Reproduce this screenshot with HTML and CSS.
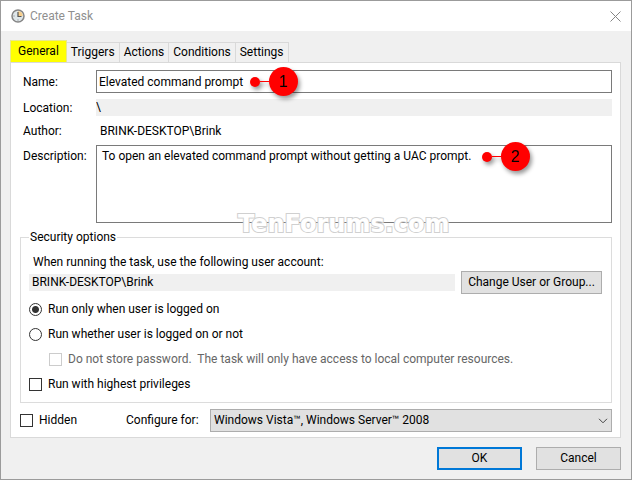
FILE: index.html
```html
<!DOCTYPE html>
<html lang="en">
<head>
<meta charset="utf-8">
<title>Create Task</title>
<link rel="stylesheet" href="styles.css">
</head>
<body>
<main class="window">
  <header class="titlebar">
    <svg class="clock" viewBox="0 0 14 14" aria-hidden="true">
      <circle cx="7" cy="7" r="6" fill="#dfe7ea" stroke="#858585" stroke-width="1.5"/>
      <path d="M7 7V2.2A4.8 4.8 0 0 1 11.800 7Z" fill="#f8cf8c"/>
      <path d="M7 3V7.500H10.500" fill="none" stroke="#555" stroke-width="1.200"/>
      <path d="M2.500 7h1M7 11.500v-1" stroke="#777"/>
    </svg>
    <h1 class="title">Create Task</h1>
    <button class="close" type="button" aria-label="Close">
      <svg viewBox="0 0 11 11" aria-hidden="true"><path d="M.5 .5l10 10M10.500 .5l-10 10" stroke="#858585" fill="none"/></svg>
    </button>
  </header>

  <form class="body">
    <nav class="tabs" role="tablist">
      <button class="tab tab-active" type="button" role="tab" aria-selected="true">General</button>
      <button class="tab" type="button" role="tab">Triggers</button>
      <button class="tab" type="button" role="tab">Actions</button>
      <button class="tab" type="button" role="tab">Conditions</button>
      <button class="tab" type="button" role="tab">Settings</button>
    </nav>

    <section class="panel">
      <div class="fields">
        <label for="name">Name:</label>
        <div class="control">
          <input class="box" id="name" type="text" value="Elevated command prompt">
          <span class="callout callout-name"><i class="dot"></i><i class="line"></i><b class="badge">1</b></span>
        </div>
        <label for="location">Location:</label>
        <input class="readonly" id="location" type="text" value="\" readonly>
        <span>Author:</span>
        <span class="author">BRINK-DESKTOP\Brink</span>
        <label class="label-top" for="description">Description:</label>
        <div class="control">
          <textarea class="box area" id="description">To open an elevated command prompt without getting a UAC prompt.</textarea>
          <span class="callout callout-description"><i class="dot"></i><i class="line"></i><b class="badge">2</b></span>
          <span class="watermark">TenForums.com</span>
        </div>
      </div>

      <fieldset class="group">
        <legend>Security options</legend>
        <label class="hint" for="account">When running the task, use the following user account:</label>
        <div class="account">
          <input class="readonly" id="account" type="text" value="BRINK-DESKTOP\Brink" readonly>
          <button class="button button-wide" type="button">Change User or Group...</button>
        </div>
        <div class="options">
          <label class="option"><input type="radio" name="run" checked>Run only when user is logged on</label>
          <label class="option"><input type="radio" name="run">Run whether user is logged on or not</label>
          <label class="option option-disabled"><input type="checkbox" disabled>Do not store password.&nbsp; The task will only have access to local computer resources.</label>
          <label class="option"><input type="checkbox">Run with highest privileges</label>
        </div>
      </fieldset>

      <div class="configure">
        <label class="option"><input type="checkbox">Hidden</label>
        <label for="target">Configure for:</label>
        <div class="select-wrap">
          <select class="select" id="target"><option>Windows Vista™, Windows Server™ 2008</option></select>
          <svg class="chevron" viewBox="0 0 10 6" aria-hidden="true"><path d="M1 .8l4 4 4-4" fill="none" stroke="#444"/></svg>
        </div>
      </div>
    </section>

    <footer class="actions">
      <button class="button button-default" type="submit">OK</button>
      <button class="button" type="button">Cancel</button>
    </footer>
  </form>
</main>
</body>
</html>
```
FILE: styles.css
```css
* {
  box-sizing: border-box;
}

body {
  margin: 0;
  background: #f0f0f0;
  color: #000;
  font: 12px/17px Roboto, "Open Sans", sans-serif;
}

button,
input,
select,
textarea {
  margin: 0;
  font: inherit;
  color: inherit;
}

.window {
  min-height: 100vh;
  border: 1px solid #9b9b9b;
  background: #f0f0f0;
}

.titlebar {
  display: flex;
  align-items: center;
  height: 30px;
  padding: 0 10px;
  background: #fff;
}

.clock {
  width: 14px;
  height: 14px;
}

.title {
  flex: 1;
  margin: 0 0 0 5px;
  font-size: 12px;
  font-weight: 400;
  color: #8f8f8f;
}

.close {
  display: flex;
  padding: 0;
  border: 0;
  background: none;
}

.close svg {
  width: 11px;
  height: 11px;
}

.body {
  padding: 9px 10px 8px 9px;
}

.tabs {
  display: flex;
  align-items: flex-end;
}

.tab {
  height: 20px;
  padding: 0 4px;
  border: 1px solid #d9d9d9;
  border-width: 1px 1px 0 0;
  background: #f0f0f0;
}

.tab-active {
  height: 22px;
  padding: 0 7px;
  border: 1px solid #e8e88a;
  border-bottom: 0;
  background: #ff0;
}

.panel {
  padding: 7px 8px 5px 9px;
  border: 1px solid #d9d9d9;
  background: #fff;
}

.fields {
  display: grid;
  grid-template-columns: 73px 1fr;
  row-gap: 6px;
  align-items: center;
  padding-left: 3px;
}

.fields > label,
.fields > span {
  padding-top: 2px;
  line-height: 15px;
}

.fields > .label-top {
  align-self: start;
  padding-top: 4px;
}

.control {
  position: relative;
  display: flex;
}

.box {
  width: 100%;
  height: 23px;
  padding: 0 2px;
  border: 1px solid #7a7a7a;
  border-radius: 0;
  background: #fff;
  outline: 0;
}

.area {
  height: 78px;
  padding: 2px 5px;
  resize: none;
}

.readonly {
  display: block;
  width: 100%;
  min-width: 0;
  height: 17px;
  padding: 0;
  border: 0;
  background: #f0f0f0;
}

.author {
  padding-left: 4px;
}

.callout {
  position: absolute;
  display: flex;
  align-items: center;
  filter: drop-shadow(2px 3px 2px rgb(0 0 0 / 40%));
}

.callout-name {
  top: -3px;
  left: 154px;
}

.callout-description {
  top: -3px;
  left: 386px;
}

.dot {
  width: 10px;
  height: 10px;
  border-radius: 50%;
  background: #f00;
}

.line {
  width: 9px;
  height: 1px;
  background: #f00;
}

.badge {
  width: 29px;
  height: 29px;
  border-radius: 50%;
  background: #f00;
  font: 16px/29px "Liberation Sans", sans-serif;
  text-align: center;
}

.watermark {
  position: absolute;
  top: 65px;
  left: 142px;
  font: bold 24px/28px "DejaVu Sans", sans-serif;
  color: #fff;
  -webkit-text-stroke: 2px #d0d0d0;
  paint-order: stroke fill;
}

.group {
  min-width: 0;
  margin: 6px 0 0;
  padding: 8px 9px 9px 8px;
  border: 1px solid #dcdcdc;
}

.group legend {
  padding: 0 1px;
}

.hint {
  display: block;
  padding-left: 4px;
}

.account {
  display: flex;
  align-items: center;
  gap: 6px;
}

.account .readonly {
  flex: 1;
  padding: 0 3px;
}

.button {
  width: 85px;
  height: 23px;
  padding: 0;
  border: 1px solid #adadad;
  background: #e1e1e1;
}

.button-wide {
  width: 141px;
}

.button-default {
  border: 2px solid #0078d7;
}

.options {
  display: grid;
  gap: 8px;
  padding-top: 7px;
}

.option {
  display: flex;
  align-items: center;
  gap: 6px;
}

.option input {
  appearance: none;
  flex: none;
  width: 13px;
  height: 13px;
  border: 1px solid #333;
  background: #fff;
}

.option input[type="radio"] {
  border-radius: 50%;
}

.option input[type="radio"]:checked {
  background: radial-gradient(circle, #333 3px, #fff 4px);
}

.option-disabled {
  padding-left: 20px;
  color: #666;
}

.option-disabled input {
  border-color: #ccc;
}

.configure {
  display: grid;
  grid-template-columns: 106px 84px 1fr;
  align-items: center;
  margin-top: 6px;
}

.select-wrap {
  position: relative;
}

.select {
  display: block;
  appearance: none;
  width: 100%;
  height: 23px;
  padding: 0 20px 0 3px;
  border: 1px solid #adadad;
  border-radius: 0;
  background: #e1e1e1;
}

.chevron {
  position: absolute;
  top: 9px;
  right: 4px;
  width: 10px;
  height: 6px;
}

.actions {
  display: flex;
  justify-content: flex-end;
  gap: 14px;
  padding-top: 9px;
}
```
